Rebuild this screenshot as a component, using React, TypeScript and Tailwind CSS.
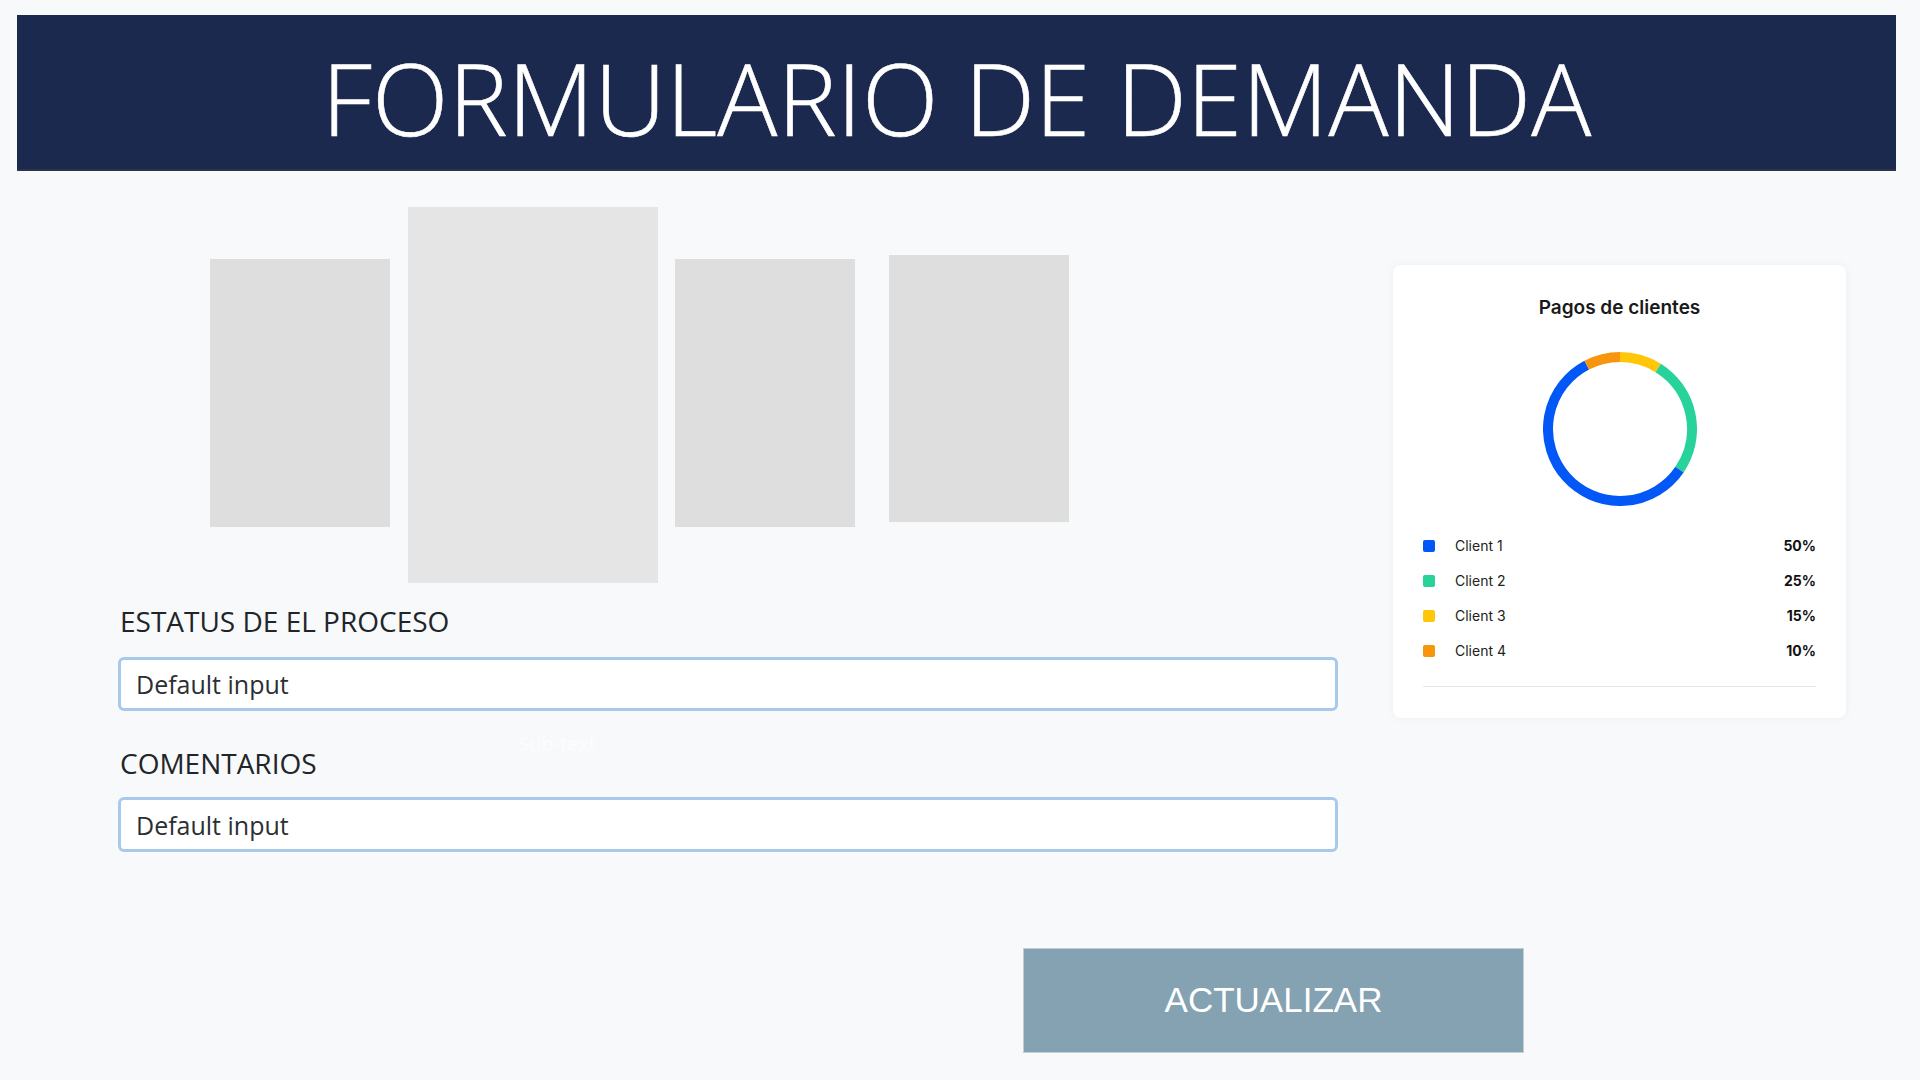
import React from "react";

function arcPath(cx: number, cy: number, r: number, a0: number, a1: number) {
  const rad = (d: number) => (d * Math.PI) / 180;
  const x0 = cx + r * Math.sin(rad(a0));
  const y0 = cy - r * Math.cos(rad(a0));
  const x1 = cx + r * Math.sin(rad(a1));
  const y1 = cy - r * Math.cos(rad(a1));
  const large = a1 - a0 > 180 ? 1 : 0;
  return `M ${x0} ${y0} A ${r} ${r} 0 ${large} 1 ${x1} ${y1}`;
}

const segments = [
  { color: "#ffc60a", from: 0, to: 32 },
  { color: "#27d39a", from: 32, to: 124.3 },
  { color: "#0257f7", from: 124.3, to: 332.5 },
  { color: "#f7960d", from: 332.5, to: 360 },
];

const legend = [
  { name: "Client 1", pct: "50%", color: "bg-[#0257f7]" },
  { name: "Client 2", pct: "25%", color: "bg-[#27d39a]" },
  { name: "Client 3", pct: "15%", color: "bg-[#ffc60a]" },
  { name: "Client 4", pct: "10%", color: "bg-[#f7960d]" },
];

function Donut() {
  return (
    <svg width="154" height="154" viewBox="0 0 154 154">
      {segments.map((s) => (
        <path
          key={s.color}
          d={arcPath(77, 77, 72, s.from, s.to)}
          stroke={s.color}
          strokeWidth={10}
          fill="none"
        />
      ))}
    </svg>
  );
}

export default function App() {
  return (
    <div className="min-h-[1080px] w-full bg-[#f8f9fa] pt-[15px] font-['Open_Sans',sans-serif]">
      <header className="ml-[17px] mr-[24px] h-[156px] bg-[#1c294e] border-b-2 border-[#2c3446] flex items-center justify-center">
        <h1 className="text-white text-[100px] font-light leading-none mt-[10px] font-['Open_Sans',sans-serif] [-webkit-text-stroke:0.6px_white]">
          FORMULARIO DE DEMANDA
        </h1>
      </header>

      <div className="flex items-start">
        <div className="ml-[118px] w-[1220px] mt-[36px] flex flex-col">
          <div className="flex items-start pl-[92px] h-[376px]">
            <div className="w-[180px] h-[268px] mt-[52px] bg-[#dedede]" />
            <div className="w-[250px] h-[376px] ml-[18px] bg-[#e5e5e5]" />
            <div className="w-[180px] h-[268px] mt-[52px] ml-[17px] bg-[#dedede]" />
            <div className="w-[180px] h-[267px] mt-[48px] ml-[34px] bg-[#dedede]" />
          </div>

          <div className="mt-[19px] ml-[2px] h-[38px] leading-[38px] text-[28px] text-[#212529]">
            ESTATUS DE EL PROCESO
          </div>
          <input
            readOnly
            defaultValue="Default input"
            className="mt-[17px] h-[54px] w-full rounded-[6px] border-[3px] border-[#a9c9ea] bg-white pl-[15px] text-[25px] text-[#2b2f33] outline-none font-['Open_Sans',sans-serif]"
          />
          <div className="mt-[25px] h-[16px] leading-[16px] ml-[400px] text-[20px] text-[#fdfdfd]">
            Sub-text
          </div>
          <div className="ml-[2px] h-[22px] leading-[22px] text-[28px] text-[#212529]">
            COMENTARIOS
          </div>
          <input
            readOnly
            defaultValue="Default input"
            className="mt-[23px] h-[55px] w-full rounded-[6px] border-[3px] border-[#a9c9ea] bg-white pl-[15px] text-[25px] text-[#2b2f33] outline-none font-['Open_Sans',sans-serif]"
          />
        </div>

        <div className="ml-[55px] mt-[94px] w-[453px] h-[453px] rounded-[8px] bg-white shadow-[0_0_8px_rgba(0,0,0,0.05)] px-[30px] flex flex-col font-['Inter',sans-serif]">
          <div className="pt-[31px] h-[55px] leading-[24px] text-center text-[19px] font-semibold text-[#1a1a1a]">
            Pagos de clientes
          </div>
          <div className="mt-[32px] flex justify-center">
            <Donut />
          </div>
          <div className="mt-[22px] flex flex-col">
            {legend.map((l) => (
              <div key={l.name} className="h-[35px] flex items-center">
                <span className={`w-[12px] h-[12px] rounded-[2px] ${l.color}`} />
                <span className="ml-[20px] text-[14px] text-[#222]">{l.name}</span>
                <span className="ml-auto text-[14px] font-bold text-[#111]">{l.pct}</span>
              </div>
            ))}
          </div>
          <div className="mt-[18px] h-px bg-[#e6e6e6]" />
        </div>
      </div>

      <div className="ml-[1023px] mt-[96px] w-[501px] h-[105px] bg-[#84a2b2] border border-[#c3cfd6] flex items-center justify-center">
        <span className="text-white text-[35px] font-['Liberation_Sans',Arial,sans-serif]">
          ACTUALIZAR
        </span>
      </div>
    </div>
  );
}
